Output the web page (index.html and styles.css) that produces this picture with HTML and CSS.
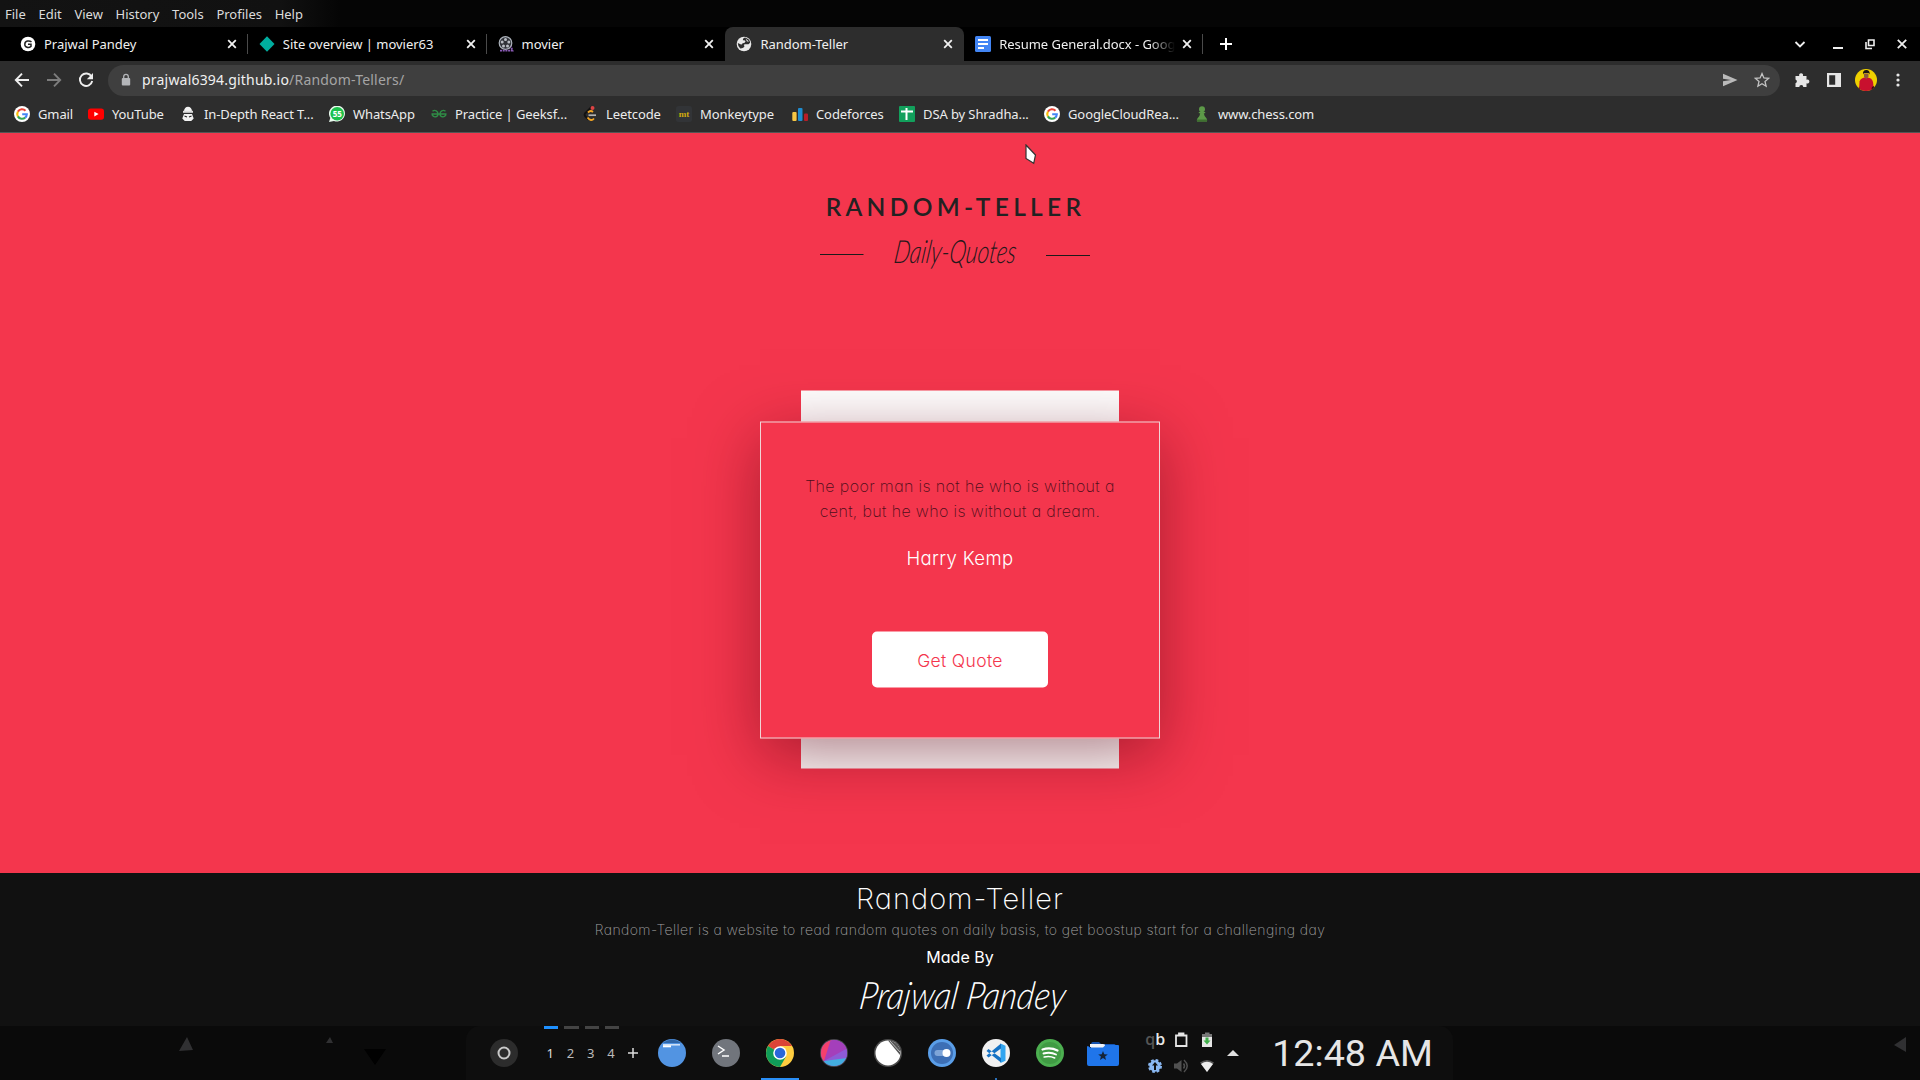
FILE: index.html
```html
<!DOCTYPE html>
<html lang="en">
<head>
<meta charset="utf-8">
<title>Random-Teller</title>
<link rel="stylesheet" href="styles.css">
</head>
<body>
<svg class="defs" width="0" height="0">
  <symbol id="x" viewBox="0 0 10 10"><path d="M1.2 1.2l7.6 7.6M8.8 1.2L1.2 8.8" stroke="#f1f1f1" stroke-width="1.8" fill="none"/></symbol>
  <symbol id="google" viewBox="0 0 16 16"><circle cx="8" cy="8" r="8" fill="#fff"/><g fill="none" stroke-width="2.1"><path d="M3.9 5.6A4.8 4.8 0 0 1 11.5 4.7" stroke="#ea4335"/><path d="M3.9 5.6a4.8 4.8 0 0 0 0 4.8" stroke="#fbbc05"/><path d="M3.9 10.4a4.8 4.8 0 0 0 7.3 1.2" stroke="#34a853"/><path d="M11.2 11.6A4.8 4.8 0 0 0 12.8 8.2H8.2" stroke="#4285f4"/></g></symbol>
</svg>

<nav class="menubar"><span>File</span><span>Edit</span><span>View</span><span>History</span><span>Tools</span><span>Profiles</span><span>Help</span></nav>

<div class="tabs">
  <div class="tab"><svg class="fav" viewBox="0 0 16 16"><circle cx="8" cy="8" r="7.3" fill="#fff"/><path d="M11.5 5.800C9.500 4.300 5 4.500 4.800 8.100s4 4.100 6.200 2.300V8.200H8" stroke="#222" stroke-width="1.5" fill="none"/></svg><span class="title">Prajwal Pandey</span><svg class="close"><use href="#x"/></svg></div>
  <div class="tab"><svg class="fav" viewBox="0 0 16 16"><path d="M8 .3L15.5 8 8 15.7.5 8z" fill="#00ad9f"/></svg><span class="title">Site overview | movier63</span><svg class="close"><use href="#x"/></svg></div>
  <div class="tab"><svg class="fav" viewBox="0 0 16 16"><circle cx="7.5" cy="7" r="6.3" fill="#303238" stroke="#aeb4bd" stroke-width="1.2"/><g fill="#b9bdc4"><circle cx="7.5" cy="3.6" r="1.5"/><circle cx="4.2" cy="6" r="1.5"/><circle cx="10.8" cy="6" r="1.5"/><circle cx="5.5" cy="10" r="1.5"/><circle cx="9.5" cy="10" r="1.5"/></g><path d="M2 14.6h12.5l-1.5-4" stroke="#8a5bb5" stroke-width="1.8" stroke-dasharray="2 .7" fill="none"/></svg><span class="title">movier</span><svg class="close"><use href="#x"/></svg></div>
  <div class="tab active"><svg class="fav" viewBox="0 0 16 16"><circle cx="8" cy="8" r="7.300" fill="#e8e8e8"/><path d="M9 1.500Q6.500 2 6.800 4.200q2.700-.2 2.700 1.300Q9 7.500 6.500 7.300 6 9 4.500 8.300L1.800 7q0 3.500 2.500 5.600Q8 12 8.500 10q-1.500-1.200.5-1.800h3.500l1.600-1.400Q14 3 9 1.500z" fill="#2d2d2d"/><path d="M9.500 2.500l3.500 3H11zM3.500 4L5 2.800 5.500 6 3 5.800z" fill="#e8e8e8"/></svg><span class="title">Random-Teller</span><svg class="close"><use href="#x"/></svg></div>
  <div class="tab"><svg class="fav" viewBox="0 0 16 16"><rect width="16" height="16" rx="1.5" fill="#4285f4"/><path d="M3 4h10M3 8h10M3 12h6" stroke="#fff" stroke-width="1.8"/></svg><span class="title fade">Resume General.docx - Google</span><svg class="close"><use href="#x"/></svg></div>
  <svg class="newtab" viewBox="0 0 12 12"><path d="M6 0v12M0 6h12" stroke="#fff" stroke-width="2"/></svg>
  <div class="winbtns">
    <svg viewBox="0 0 12 12"><path d="M1.500 4L6 8.500 10.500 4" stroke="#eee" stroke-width="1.8" fill="none"/></svg>
    <svg viewBox="0 0 12 12"><path d="M1 10h10" stroke="#eee" stroke-width="2"/></svg>
    <svg viewBox="0 0 12 12"><path d="M4.500 2h5.500v5.500H4.500zM2 4v6.500h6" stroke="#eee" stroke-width="1.6" fill="none"/></svg>
    <svg viewBox="0 0 12 12"><path d="M1.800 1.800l8.400 8.400M10.200 1.800l-8.400 8.400" stroke="#eee" stroke-width="1.8"/></svg>
  </div>
</div>

<div class="toolbar">
  <svg class="tool" viewBox="0 0 16 16"><path d="M15 8H2.200M8 1.600L1.800 8 8 14.400" stroke="#eee" stroke-width="1.9" fill="none"/></svg>
  <svg class="tool" viewBox="0 0 16 16"><path d="M1 8h12.800M8 1.600L14.200 8 8 14.400" stroke="#7d7d7d" stroke-width="1.9" fill="none"/></svg>
  <svg class="tool" viewBox="0 0 16 16"><path d="M13.500 4.600A6.200 6.200 0 1 0 14.200 9" stroke="#eee" stroke-width="1.900" fill="none"/><path d="M15 1v6.200H8.800z" fill="#eee"/></svg>
  <div class="omnibox">
    <svg class="lock" viewBox="0 0 10 14"><rect x=".8" y="5" width="8.400" height="7.500" rx="1" fill="#b4b6b9"/><path d="M2.700 5.500V3.600a2.300 2.300 0 0 1 4.600 0v1.900" stroke="#b4b6b9" stroke-width="1.300" fill="none"/></svg>
    <span class="url">prajwal6394.github.io<i>/Random-Tellers/</i></span>
    <svg class="send" viewBox="0 0 16 16"><path d="M1 1.800L15.500 8 1 14.200V9.300L9 8 1 6.700z" fill="#bababa"/></svg>
    <svg class="star" viewBox="0 0 16 16"><path d="M8 1.600l1.900 4.400 4.700.4-3.600 3.100 1.100 4.700L8 11.700l-4.100 2.500L5 9.500 1.400 6.400l4.700-.4z" stroke="#c4c4c4" stroke-width="1.300" fill="none"/></svg>
  </div>
  <div class="actions">
    <svg viewBox="0 0 16 16"><path d="M1.500 4h3.800a2 2 0 1 1 3.600 0h3.600v3.700a2 2 0 1 1 0 3.600V15H9.300a2 2 0 0 0-4 0H1.500v-3.800a2 2 0 0 0 0-3.800z" fill="#e6e6e6"/></svg>
    <svg viewBox="0 0 16 16"><path fill-rule="evenodd" d="M1 1h14v14H1zM3.200 3.200v9.600h6V3.200z" fill="#e6e6e6"/></svg>
    <svg class="avatar" viewBox="0 0 22 22"><clipPath id="av"><circle cx="11" cy="11" r="11"/></clipPath><g clip-path="url(#av)"><rect width="22" height="22" fill="#efd000"/><path d="M4 22l.5-9.500Q6 9 9.500 8.600h3Q17 9 18 13l1 9z" fill="#c8102e"/><path d="M9 4.500h4.500v3.300L11.300 10 9 8z" fill="#8b5a3c"/><path d="M8 5.500Q7.500 1 11.300 1t3.300 4.500l-1-1.500H9z" fill="#1c1512"/><path d="M4 17.500l1.500 4.500H3zM17 18l2-1v5h-3z" fill="#3b0b10"/></g></svg>
    <svg viewBox="0 0 16 16"><g fill="#e6e6e6"><circle cx="8" cy="3" r="1.600"/><circle cx="8" cy="8" r="1.600"/><circle cx="8" cy="13" r="1.600"/></g></svg>
  </div>
</div>

<div class="bookmarks">
  <a><svg viewBox="0 0 16 16"><use href="#google"/></svg>Gmail</a>
  <a><svg viewBox="0 0 16 16"><rect y="2.500" width="16" height="11.300" rx="2.800" fill="#f00"/><path d="M6.300 5.700v4.900L10.600 8.100z" fill="#fff"/></svg>YouTube</a>
  <a><svg viewBox="0 0 16 16"><path d="M4 5.200a4 4.500 0 0 1 8 0M4 8h8l1.700 4.500-2.500 2.500H4.800L2.300 12.500z" fill="#f2f2f2"/><path d="M3 4.800h10v2H3z" fill="#ddd"/><path d="M4.500 10l2.500 1M11.500 10L9 11" stroke="#222" stroke-width="1.300"/></svg>In-Depth React T...</a>
  <a><svg viewBox="0 0 16 16"><path d="M0 16l1.300-4A8 8 0 1 1 5 15z" fill="#e9f9ed"/><circle cx="8.200" cy="7.800" r="6.800" fill="#1bc14b"/><text x="8.200" y="11.200" class="badge">55</text></svg>WhatsApp</a>
  <a><svg viewBox="0 0 16 16"><g stroke="#2f8d46" stroke-width="1.400" fill="none"><path d="M.5 8h15M1.500 5.300C4 3.300 7 5 7 8s-4 4-5.700 1.200V8M14.500 5.300C12 3.300 9 5 9 8s4 4 5.700 1.200V8"/></g></svg>Practice | Geeksf...</a>
  <a><svg viewBox="0 0 16 16"><path d="M9.500 1L3 7.500q-1 1.300 0 2.500l3.500 3.500" stroke="#111" stroke-width="1.900" fill="none"/><path d="M6 6.500Q8.500 4 11 6M5.500 11.500q3.500 4.500 6.500 1" stroke="#f5a623" stroke-width="1.900" fill="none"/><path d="M6.500 9.200H14" stroke="#b3b3b3" stroke-width="1.700"/><circle cx="10.500" cy="2" r="2" fill="#d44"/></svg>Leetcode</a>
  <a><svg viewBox="0 0 16 16"><rect width="16" height="16" rx="2.500" fill="#323437"/><text x="8" y="11" class="mt">mt</text></svg>Monkeytype</a>
  <a><svg viewBox="0 0 16 16"><rect x=".3" y="6" width="4.300" height="9" rx="1" fill="#f6c644"/><rect x="6" y="2" width="4.500" height="13" rx="1" fill="#1f8dd0"/><rect x="12" y="7.500" width="4" height="7.500" rx="1" fill="#b81e28"/></svg>Codeforces</a>
  <a><svg viewBox="0 0 16 16"><rect width="16" height="16" rx="1" fill="#12a05c"/><path d="M7.500 2v12M2 5.500h12" stroke="#fff" stroke-width="2"/></svg>DSA by Shradha...</a>
  <a><svg viewBox="0 0 16 16"><use href="#google"/></svg>GoogleCloudRea...</a>
  <a><svg viewBox="0 0 16 16"><circle cx="8" cy="3.200" r="3" fill="#5d9948"/><path d="M4.800 6h6.400v1.300H9.800q.3 3 2.800 5.200.9 1.500.4 3H3q-.5-1.500.4-3Q6 10.300 6.200 7.300H4.800z" fill="#5d9948"/><path d="M3 13.500h10v2H3z" fill="#3e702f"/></svg>www.chess.com</a>
</div>

<main class="page">
  <header class="logo">
    <h1>RANDOM-TELLER</h1>
    <svg class="tagline" width="270" height="50" viewBox="0 0 270 50"><path d="M0 20.500h43.500M226 21.500h44" stroke="#1b1b1b"/><g transform="translate(70 29) skewX(-8)"><text x="3" y="0" class="script" textLength="122" lengthAdjust="spacingAndGlyphs">Daily-Quotes</text></g></svg>
  </header>
  <section class="stack">
    <div class="card"><div class="face">
      <p class="quote">The poor man is not he who is without a<br>cent, but he who is without a dream.</p>
      <p class="author">Harry Kemp</p>
      <button class="btn">Get Quote</button>
    </div></div>
  </section>
  <svg class="cursor" viewBox="0 0 12 21"><path d="M1 1l9.500 10-1.800 8.300L1 14.500z" fill="#fff" stroke="#333" stroke-width="1.200"/></svg>
</main>

<footer class="footer">
  <h2>Random-Teller</h2>
  <p class="about">Random-Teller is a website to read random quotes on daily basis, to get boostup start for a challenging day</p>
  <p class="made">Made By</p>
  <svg class="sign" width="212" height="50" viewBox="0 0 212 50"><g transform="translate(1 36) skewX(-8)"><text x="3" y="0" class="signature" textLength="206" lengthAdjust="spacingAndGlyphs">Prajwal Pandey</text></g></svg>
</footer>

<div class="taskbar">
  <svg class="side left" viewBox="0 0 466 54"><path d="M179 25l8-14 6 13zM326 17l4-6 3 6z" fill="#303032"/><path d="M364 23h22l-11 16z" fill="#010101"/></svg>
  <div class="dock">
    <svg class="launcher" viewBox="0 0 28 28"><circle cx="14" cy="14" r="14" fill="#2c2c2c"/><circle cx="14" cy="14" r="5.500" fill="none" stroke="#c9c9c9" stroke-width="2"/></svg>
    <div class="pager"><span class="on">1</span><span>2</span><span>3</span><span>4</span></div>
    <svg class="plus" viewBox="0 0 12 12"><path d="M6 1v10M1 6h10" stroke="#ddd" stroke-width="1.500"/></svg>
    <div class="apps">
      <div><svg viewBox="0 0 28 28"><circle cx="14" cy="14" r="14" fill="#5294e2"/><path d="M4.500 4Q14-3 23.500 4z" fill="#2f66a8"/><path d="M5 5.800h17" stroke="#d5e4f7" stroke-width="1.500"/><path d="M5 7.300h8" stroke="#fff" stroke-width="2"/></svg></div>
      <div><svg viewBox="0 0 28 28"><circle cx="14" cy="14" r="14" fill="#71757c"/><path d="M6 7l6 4-6 4M10 17h7" stroke="#fff" stroke-width="1.500" fill="none"/></svg></div>
      <div class="run"><svg viewBox="0 0 28 28"><circle cx="14" cy="14" r="14" fill="#ffcd40"/><path d="M14 14L1.900 7A14 14 0 0 1 26.100 7H14z" fill="#db4437"/><path d="M14 14L1.900 7A14 14 0 0 0 14 28l6-10.500z" fill="#0f9d58"/><circle cx="14" cy="14" r="6.800" fill="#fff"/><circle cx="14" cy="14" r="5.300" fill="#2a66d9"/></svg></div>
      <div><svg viewBox="0 0 28 28"><clipPath id="kr"><circle cx="14" cy="14" r="13"/></clipPath><circle cx="14" cy="14" r="14" fill="#49474e"/><g clip-path="url(#kr)"><path d="M0 0h28v28H0z" fill="#8e5bd6"/><path d="M0 0h12l2 9L4 22H0z" fill="#f4406c"/><path d="M11 0h12l5 9v4L4 22z" fill="#a43fbb"/><path d="M28 9v11L4 22z" fill="#8e5bd6"/><path d="M4 22l23-3v9H0z" fill="#43aee0"/></g></svg></div>
      <div><svg viewBox="0 0 28 28"><circle cx="14" cy="14" r="14" fill="#4a4a4a"/><circle cx="14" cy="14" r="12.500" fill="#fff"/><path d="M14 1.500q8.500 0 12 8.500v6z" fill="#555"/><path d="M16 2l10 11" stroke="#bbb" stroke-width="1"/></svg></div>
      <div><svg viewBox="0 0 28 28"><circle cx="14" cy="14" r="14" fill="#5a9ee8"/><circle cx="14" cy="14" r="11" fill="#3d6fb5"/><rect x="6.500" y="11" width="15" height="6" rx="3" fill="#7ea5d8"/><circle cx="18.500" cy="14" r="4" fill="#fff"/></svg></div>
      <div class="dot"><svg viewBox="0 0 28 28"><circle cx="14" cy="14" r="14" fill="#f1f1f1"/><path d="M18.500 4.500l5 2.200v15l-5 2.200z" fill="#31a5f0"/><path d="M19 4.500L4.500 16.500l2 2L19 9.500zM19 23.500L4.500 12l2-2L19 19z" fill="#1672c4"/></svg></div>
      <div><svg viewBox="0 0 28 28"><circle cx="14" cy="14" r="14" fill="#4caf50"/><circle cx="14" cy="14" r="11" fill="#388e3c" opacity=".6"/><g stroke="#fff" fill="none" stroke-linecap="round"><path d="M6.500 10.500q8-2.500 15 1" stroke-width="2.200"/><path d="M7.500 14.500q7-2 12.500 1" stroke-width="1.900"/><path d="M8.200 18q5.500-1.500 10.500 1" stroke-width="1.600"/></g></svg></div>
      <div><svg class="wide" viewBox="0 0 32 28"><path d="M4 6q0-3 2-3h6l2 2h13q2 0 2 3z" fill="#1553b0"/><path d="M4 5.500h14v4H4z" fill="#f2f2f2"/><path d="M0 8q0-1 1-1l2 1.500h13L18.500 6H31q1 0 1 1v18q0 2-2 2H2q-2 0-2-2z" fill="#1f75ea"/><path d="M3 5h14l-2 3H3z" fill="#eef3fa"/><path d="M16 12l1.300 3.200 3.500.2-2.700 2.200.9 3.400-3-1.900-3 1.900.9-3.400-2.700-2.200 3.500-.2z" fill="#152437"/></svg></div>
    </div>
    <div class="tray">
      <span class="qb"><i>q</i>b</span>
      <svg viewBox="0 0 16 16"><path d="M3 3.500h10.500V14H3zM6 3.500V1.500h4.500v2" stroke="#e5e5e5" stroke-width="1.800" fill="none"/></svg>
      <svg viewBox="0 0 16 16"><path d="M6 .5h4.500V2H13v3H3V2h3z" fill="#777"/><path d="M3 5h10v10H3z" fill="#e5e5e5"/><path d="M8 12.500L4.500 8.500h2V5.500h3v3h2z" fill="#3fae49"/></svg>
      <svg viewBox="0 0 16 16"><circle cx="8" cy="8" r="5.700" fill="#8ab8f2"/><circle cx="8" cy="8" r="6" fill="none" stroke="#8ab8f2" stroke-width="2" stroke-dasharray="2.700 2"/><path d="M8 4l3 3.500H9V12H7V7.500H5z" fill="#111"/></svg>
      <svg viewBox="0 0 16 16"><path d="M1 5.500h3L8.500 2v12L4 10.500H1z" fill="#505050"/><path d="M10.500 5.500q2 2.500 0 5M11 2q6.500 6 0 12" stroke="#505050" stroke-width="1.500" fill="none"/></svg>
      <svg viewBox="0 0 16 16"><path d="M1 4.500Q8-.5 15 4.500L8 14z" fill="#555"/><path d="M2 6Q8 1.500 14 6L8 14z" fill="#eee"/></svg>
    </div>
    <svg class="up" viewBox="0 0 12 6"><path d="M6 0l6 6H0z" fill="#e0e0e0"/></svg>
    <div class="clock">12:48 AM</div>
  </div>
  <svg class="side right" viewBox="0 0 467 54"><path d="M441 19l12-8v15z" fill="#303032"/></svg>
</div>
</body>
</html>
```

FILE: styles.css
```css
* { box-sizing: border-box; }
body {
  margin: 0; width: 1920px; height: 1080px; overflow: hidden;
  display: flex; flex-direction: column; background: #000;
  font-family: "Noto Sans", sans-serif; font-size: 13px; color: #f0f0f0;
}
svg { display: block; flex: none; }
p, h1, h2 { margin: 0; }
.defs { position: absolute; }

.menubar {
  height: 27px; flex: none; display: flex; align-items: center; gap: 12.700px; padding: 1px 0 0 5px;
  background: linear-gradient(90deg, #131313 0, #111 280px, #050505 340px); color: #dcdcdc;
  line-height: 18px;
}

.tabs { height: 34px; flex: none; display: flex; align-items: center; padding-left: 9px; }
.tab { width: 238.800px; height: 34px; display: flex; align-items: center; padding: 0 11px 0 11px; position: relative; letter-spacing: -.03px; }
.tab::after { content: ""; position: absolute; right: 0; top: 7px; width: 1px; height: 20px; background: #4a4a4a; }
.tab.active { background: #2d2d2d; border-radius: 8px 8px 0 0; }
.tab.active::after, .tab:nth-child(3)::after { display: none; }
.fav { width: 16px; height: 16px; margin-right: 8px; }
.title { flex: 1; white-space: nowrap; overflow: hidden; line-height: 20px; }
.fade { -webkit-mask-image: linear-gradient(90deg, #000 150px, transparent 176px); mask-image: linear-gradient(90deg, #000 150px, transparent 176px); }
.close { width: 10px; height: 10px; margin-left: 7px; }
.newtab { width: 12px; height: 12px; margin-left: 17px; }
.winbtns { margin-left: auto; margin-right: 12px; display: flex; gap: 20px; }
.winbtns svg { width: 12px; height: 12px; }
.winbtns svg:first-child { margin-right: 6px; }

.toolbar { height: 38px; flex: none; background: #2d2d2d; display: flex; align-items: center; padding-left: 14px; }
.tool { width: 16px; height: 16px; margin-right: 16px; }
.omnibox {
  width: 1672px; height: 31px; margin-left: -2px; background: #3f3f3f; border-radius: 16px;
  display: flex; align-items: center; padding: 0 10px 0 13px;
}
.lock { width: 10px; height: 14px; margin-right: 11px; }
.url { flex: 1; font-size: 14px; line-height: 20px; letter-spacing: .2px; }
.url i { font-style: normal; color: #a5a5a5; }
.send, .star { width: 16px; height: 16px; margin-left: 16px; }
.actions { flex: 1; display: flex; align-items: center; gap: 16px; padding-left: 14px; }
.actions svg { width: 16px; height: 16px; }
.actions .avatar { width: 22px; height: 22px; margin: 0 -3px; }

.bookmarks {
  height: 34px; flex: none; background: #2d2d2d; border-bottom: 1px solid #555; padding-left: 14px;
  display: grid; align-items: center; color: #ececec; letter-spacing: -.1px;
  grid-template-columns: 74px 92px 149px 102px 151px 94px 116px 107px 145px 150px 1fr;
}
.bookmarks a { display: flex; align-items: center; gap: 8px; white-space: nowrap; line-height: 20px; padding-bottom: 3px; }
.bookmarks svg { width: 16px; height: 16px; }
.badge { font: bold 8px "Noto Sans", sans-serif; fill: #fff; text-anchor: middle; }
.mt { font: bold 9px "Liberation Serif", serif; fill: #d1ab0c; text-anchor: middle; }

.page {
  height: 740px; flex: none; background: #f4364d; position: relative;
  display: flex; flex-direction: column; align-items: center;
}
.logo { height: 257px; padding-top: 56px; width: 270px; margin-right: 10px; display: flex; flex-direction: column; align-items: center; }
.logo h1 { font: 600 24.500px/36px Lato, sans-serif; letter-spacing: 4.300px; color: #222; white-space: nowrap; margin-right: -1px; }
.tagline { margin-top: 9px; overflow: visible; }
.script { font: italic 300 32px Lato, sans-serif; fill: #26181b; }
.stack {
  width: 318px; height: 378px; background: #fff; display: flex; align-items: center; justify-content: center;
  transform: translateY(.5px);
}
.card {
  width: 400px; height: 317px; margin-top: 1px; flex: none; border: 1px solid #f0d4d6; background: #f4364d;
  box-shadow: 0 16px 60px rgba(95, 6, 20, .5);
}
.face {
  height: 315px; padding-top: 51px; display: flex; flex-direction: column; align-items: center; text-align: center;
  font-family: Inter, sans-serif; font-feature-settings: "cv11";
}
.quote { font-weight: 250; font-size: 16px; line-height: 25px; color: #4d0e1a; white-space: nowrap; letter-spacing: .37px; }
.author { font-weight: 350; font-size: 18.500px; line-height: 27px; margin-top: 21px; color: #fff; letter-spacing: .35px; }
.btn {
  width: 176px; height: 56px; padding: 1px 0 0; margin-top: 60px; border: 0; border-radius: 5px; background: #fff; color: #f4364d;
  font: 350 17.500px/24px Inter, sans-serif; font-feature-settings: "cv11"; letter-spacing: .35px;
}
.cursor { position: absolute; left: 1025px; top: 11px; width: 12px; height: 21px; }

.footer {
  height: 153px; flex: none; background: #111; display: flex; flex-direction: column; align-items: center;
  font-family: Inter, sans-serif; font-feature-settings: "cv11"; white-space: nowrap;
}
.footer h2 { font-weight: 200; font-size: 29px; line-height: 36px; margin-top: 8px; color: #fff; letter-spacing: 1.050px; }
.about { font-weight: 250; font-size: 14px; line-height: 22px; margin-top: 2px; color: #a0a0a0; letter-spacing: .4px; }
.made { font-weight: 400; font-size: 16px; line-height: 24px; margin-top: 4px; color: #fff; }
.sign { margin-top: 4px; overflow: visible; }
.signature { font: italic 300 38px Lato, sans-serif; fill: #fff; }

.taskbar { height: 54px; flex: none; background: #0a0a0a; display: flex; }
.side { height: 54px; }
.left { width: 466px; }
.right { width: 467px; }
.dock { width: 987px; height: 54px; background: #0e0e0e; border-radius: 14px 14px 0 0; display: flex; align-items: center; padding-left: 24px; }
.launcher { width: 28px; height: 28px; }
.pager { display: flex; gap: 6px; margin-left: 26px; height: 54px; }
.pager span { width: 14.300px; height: 54px; border-top: 3px solid #444; text-align: center; font-size: 13px; line-height: 49px; color: #bbb; padding-right: 2px; }
.pager .on { border-color: #1e90ff; color: #ddd; }
.plus { width: 12px; height: 12px; margin-left: 8px; }
.apps { display: flex; margin-left: 6px; }
.apps div { width: 54px; height: 54px; display: flex; align-items: center; justify-content: center; border-bottom: 2px solid transparent; padding-top: 2px; }
.apps svg { width: 28px; height: 28px; }
.apps .wide { width: 32px; margin-right: 2px; }
.apps .run { background: linear-gradient(#2a8ff7, #2a8ff7) center bottom / 38px 2px no-repeat border-box; }
.apps .dot { background: linear-gradient(#2a6fb7, #2a6fb7) center bottom / 2px 2px no-repeat border-box; }
.tray { display: grid; grid-template-columns: repeat(3, 26px); grid-template-rows: 26px 26px; margin-left: 11px; justify-items: center; align-items: center; }
.tray svg { width: 16px; height: 16px; }
.qb { font: 600 16px/20px "Open Sans", sans-serif; color: #e8e8e8; padding-bottom: 2px; }
.qb i { font-style: normal; color: #555; }
.up { width: 12px; height: 6px; margin-left: 7px; }
.clock { font: 400 37.700px/54px Roboto, sans-serif; color: #e6e6e6; margin-left: 33px; white-space: nowrap; }
```
